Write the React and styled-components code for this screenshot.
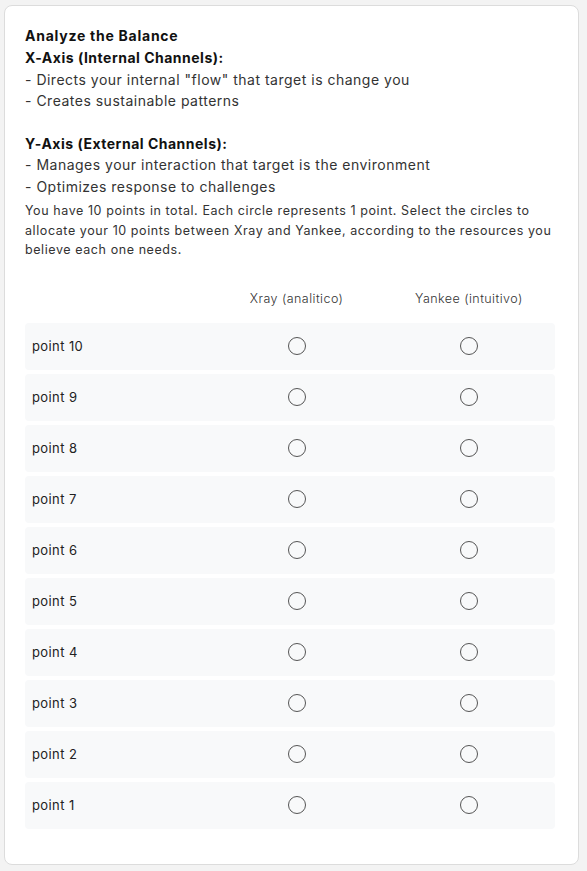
import styled, { createGlobalStyle } from 'styled-components';

const GlobalStyle = createGlobalStyle`
  body {
    margin: 0;
    background: #f3f3f3;
    font-family: Inter, "Open Sans", sans-serif;
    color: #222;
  }
`

const Card = styled.div`
  margin: 5px 8px 8px 4px;
  background: #fff;
  border: 1px solid #dcdcdc;
  border-radius: 8px;
  padding: 19px 23px 35px 20px;
`

const Title = styled.div`
  font-size: 14px;
  line-height: 22px;
  font-weight: 700;
  letter-spacing: 0.75px;
  color: #111;
`

const Line = styled.div`
  font-size: 14px;
  line-height: 21.5px;
  letter-spacing: 0.5px;
  color: #333;
  font-weight: ${p => (p.bold ? 700 : 400)};
  ${p => p.bold && 'color: #111;'}
  ${p => p.gapTop && 'margin-top: 21px;'}
`

const Note = styled.p`
  margin: 4px 0 0;
  font-size: 12.5px;
  line-height: 19.5px;
  letter-spacing: 0.58px;
  color: #333;
`

const Table = styled.div`
  margin-top: 19px;
  display: flex;
  flex-direction: column;
  gap: 4px;
`

const Grid = styled.div`
  display: grid;
  grid-template-columns: 35% 1fr 1fr;
  align-items: center;
`

const Head = styled(Grid)`
  height: 40px;
  font-size: 12.5px;
  font-weight: 300;
  letter-spacing: 0.45px;
  color: #333;

  & > span {
    text-align: center;
  }
`

const Row = styled(Grid)`
  height: 47px;
  background: #f8f9fa;
  border-radius: 4px;
`

const Label = styled.span`
  padding-left: 7px;
  font-size: 13px;
  letter-spacing: 0.4px;
  color: #222;
`

const Cell = styled.label`
  display: flex;
  justify-content: center;
  align-items: center;
`

const Radio = styled.input.attrs({ type: 'radio' })`
  appearance: none;
  margin: 0;
  width: 18px;
  height: 18px;
  border: 1.5px solid #555;
  border-radius: 50%;
  background: transparent;
  cursor: pointer;

  &:checked {
    background: radial-gradient(circle, #333 0 4px, transparent 5px);
  }
`

const points = [10, 9, 8, 7, 6, 5, 4, 3, 2, 1]

export default function App() {
  return (
    <>
      <GlobalStyle />
      <Card>
        <Title>Analyze the Balance</Title>
        <Line bold>X-Axis (Internal Channels):</Line>
        <Line>- Directs your internal "flow" that target is change you</Line>
        <Line>- Creates sustainable patterns</Line>
        <Line bold gapTop>Y-Axis (External Channels):</Line>
        <Line>- Manages your interaction that target is the environment</Line>
        <Line>- Optimizes response to challenges</Line>
        <Note>
          You have 10 points in total. Each circle represents 1 point. Select the circles to
          allocate your 10 points between Xray and Yankee, according to the resources you
          believe each one needs.
        </Note>

        <Table>
          <Head>
            <div />
            <span>Xray (analitico)</span>
            <span>Yankee (intuitivo)</span>
          </Head>
          {points.map(n => (
            <Row key={n}>
              <Label>point {n}</Label>
              <Cell><Radio name={`p${n}`} value="x" /></Cell>
              <Cell><Radio name={`p${n}`} value="y" /></Cell>
            </Row>
          ))}
        </Table>
      </Card>
    </>
  )
}
